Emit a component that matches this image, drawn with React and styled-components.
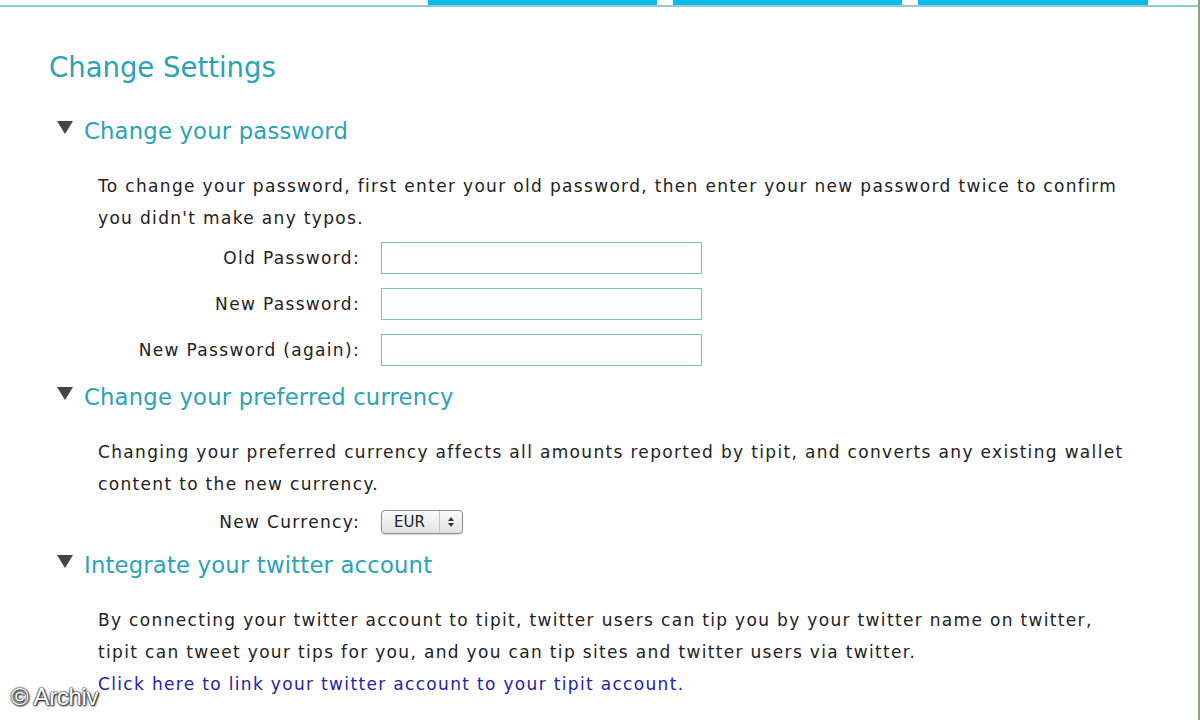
import styled, { createGlobalStyle } from "styled-components"

const Global = createGlobalStyle`
    html, body { margin: 0; padding: 0; background: #fff; }
    body { font-family: "DejaVu Sans", Verdana, sans-serif; }
`

const Frame = styled.div`
    width: 1200px;
    height: 720px;
    position: relative;
    overflow: hidden;
    box-sizing: border-box;
    border-right: 2px solid #8aa58a;
    background: #fefefe;
`

const TopBar = styled.div`
    display: flex;
    height: 5px;
    border-bottom: 2px solid #95c6d8;
    padding-left: 428px;
    gap: 16px;
`

const Tab = styled.div`
    width: ${props => props.w}px;
    background: #0bbbe8;
`

const Content = styled.div`
    padding: 40px 0 0 49px;
`

const Title = styled.h1`
    margin: 0 0 29px;
    font-weight: normal;
    font-size: 27.5px;
    color: #2ba2b6;
    line-height: 40px;
`

const Section = styled.section`
    margin-bottom: 9px;
`

const SectionHead = styled.h2`
    display: flex;
    align-items: center;
    gap: 11px;
    margin: 0 0 24px 8px;
    font-weight: normal;
    font-size: 22.7px;
    letter-spacing: 0.2px;
    line-height: 30px;
    color: #2aa3b7;
`

const Arrow = styled.span`
    width: 0;
    height: 0;
    border-left: 8px solid transparent;
    border-right: 8px solid transparent;
    border-top: 13px solid #444;
    margin-top: -8px;
`

const Body = styled.div`
    padding-left: 49px;
    font-size: 17px;
    letter-spacing: 1.33px;
    line-height: 32px;
    color: #222;
`

const Para = styled.p`
    margin: 0;
    width: 1030px;
`

const FormRow = styled.div`
    display: grid;
    grid-template-columns: 262px auto;
    column-gap: 21px;
    align-items: center;
    height: ${props => props.h || 46}px;
    margin-top: ${props => props.top || 0}px;
`

const Label = styled.label`
    text-align: right;
`

const Input = styled.div`
    width: 319px;
    height: 30px;
    border: 1px solid #7dbfc4;
    background: #fff;
`

const Select = styled.div`
    display: flex;
    align-items: center;
    width: 82px;
    height: 24px;
    box-sizing: border-box;
    border: 1px solid #8e8e8e;
    border-radius: 4px;
    background: linear-gradient(#fbfbfb, #e2e2e2);
    box-shadow: 0 1px 1px rgba(0,0,0,.15);
    font-size: 15px;
    letter-spacing: 0;
    color: #222;
`

const SelectValue = styled.span`
    flex: 1;
    padding-left: 12px;
    line-height: 22px;
`

const SelectArrows = styled.span`
    width: 22px;
    height: 100%;
    border-left: 1px solid #c4c4c4;
    display: flex;
    align-items: center;
    justify-content: center;
`

const Link = styled.a`
    color: #2323a8;
    text-decoration: none;
`

const Watermark = styled.div`
    position: absolute;
    left: 11px;
    bottom: 9px;
    font-family: "Liberation Sans", Arial, sans-serif;
    font-size: 24px;
    color: #fff;
    letter-spacing: -0.3px;
    text-shadow: 0 0 2px #222, 0 0 2px #222, 1px 1px 2px #000;
`

export default function App() {
    return (
        <Frame>
            <Global />
            <TopBar>
                <Tab w={229} />
                <Tab w={229} />
                <Tab w={230} />
            </TopBar>
            <Content>
                <Title>Change Settings</Title>
                <Section>
                    <SectionHead><Arrow />Change your password</SectionHead>
                    <Body>
                        <Para>To change your password, first enter your old password, then enter your new password twice to confirm you didn't make any typos.</Para>
                        <FormRow h={46} top={1}><Label>Old Password:</Label><Input /></FormRow>
                        <FormRow h={46}><Label>New Password:</Label><Input /></FormRow>
                        <FormRow h={46}><Label>New Password (again):</Label><Input /></FormRow>
                    </Body>
                </Section>
                <Section>
                    <SectionHead><Arrow />Change your preferred currency</SectionHead>
                    <Body>
                        <Para>Changing your preferred currency affects all amounts reported by tipit, and converts any existing wallet content to the new currency.</Para>
                        <FormRow h={38} top={3}>
                            <Label>New Currency:</Label>
                            <Select>
                                <SelectValue>EUR</SelectValue>
                                <SelectArrows>
                                    <svg width="8" height="12" viewBox="0 0 8 12">
                                        <path d="M4 1 L7 5 L1 5 Z M4 11 L7 7 L1 7 Z" fill="#333" />
                                    </svg>
                                </SelectArrows>
                            </Select>
                        </FormRow>
                    </Body>
                </Section>
                <Section>
                    <SectionHead><Arrow />Integrate your twitter account</SectionHead>
                    <Body>
                        <Para>By connecting your twitter account to tipit, twitter users can tip you by your twitter name on twitter, tipit can tweet your tips for you, and you can tip sites and twitter users via twitter.</Para>
                        <Link href="#">Click here to link your twitter account to your tipit account.</Link>
                    </Body>
                </Section>
            </Content>
            <Watermark>© Archiv</Watermark>
        </Frame>
    )
}
